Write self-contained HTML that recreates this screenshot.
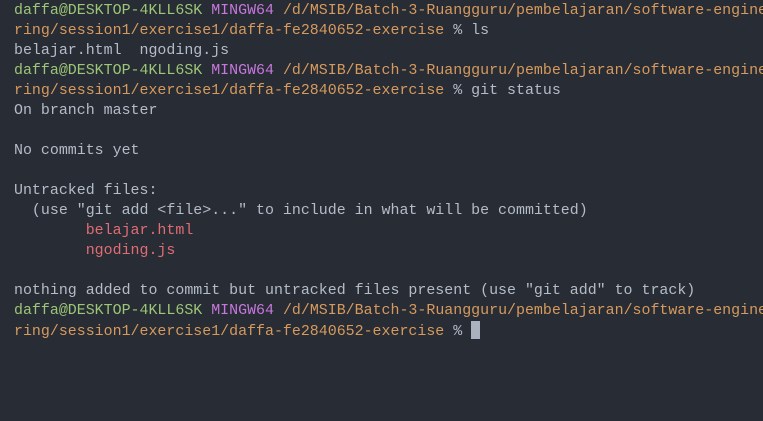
<!DOCTYPE html>
<html><head><style>
html,body{margin:0;padding:0;background:#282c34;width:763px;height:421px;overflow:hidden}
pre{margin:0;padding:1px 0 0 14px;font-family:"Liberation Mono",monospace;font-size:14.95px;line-height:20px;color:#b4bcc8;white-space:pre}
.g{color:#9cc678}.p{color:#c678dd}.o{color:#d69a5e}.r{color:#e06c75}
.c{display:inline-block;width:9px;height:18px;background:#abb2bf;vertical-align:-4px}
</style></head><body><pre><span class="g">daffa@DESKTOP-4KLL6SK</span> <span class="p">MINGW64</span> <span class="o">/d/MSIB/Batch-3-Ruangguru/pembelajaran/software-engine</span>
<span class="o">ring/session1/exercise1/daffa-fe2840652-exercise</span> % ls
belajar.html  ngoding.js
<span class="g">daffa@DESKTOP-4KLL6SK</span> <span class="p">MINGW64</span> <span class="o">/d/MSIB/Batch-3-Ruangguru/pembelajaran/software-engine</span>
<span class="o">ring/session1/exercise1/daffa-fe2840652-exercise</span> % git status
On branch master

No commits yet

Untracked files:
  (use "git add &lt;file&gt;..." to include in what will be committed)
        <span class="r">belajar.html</span>
        <span class="r">ngoding.js</span>

nothing added to commit but untracked files present (use "git add" to track)
<span class="g">daffa@DESKTOP-4KLL6SK</span> <span class="p">MINGW64</span> <span class="o">/d/MSIB/Batch-3-Ruangguru/pembelajaran/software-engine</span>
<span class="o">ring/session1/exercise1/daffa-fe2840652-exercise</span> % <span class="c"></span></pre></body></html>
